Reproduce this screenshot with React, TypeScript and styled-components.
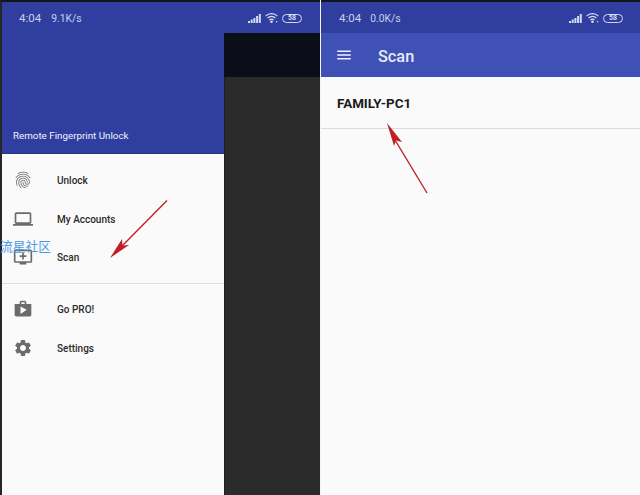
import React from "react";
import styled, { createGlobalStyle } from "styled-components";
import { MdFingerprint, MdLaptop, MdAddToQueue, MdShop, MdSettings, MdMenu } from "react-icons/md";

const Global = createGlobalStyle`
  html, body { margin: 0; padding: 0; background: #2a2a2a; }
  * { box-sizing: border-box; }
`;

const Stage = styled.div`
  position: relative;
  width: 640px;
  height: 495px;
  overflow: hidden;
  display: flex;
  background: #fafafa;
  font-family: Roboto, "Noto Sans", sans-serif;
`;

const LeftPhone = styled.div`
  width: 320px;
  height: 100%;
  display: flex;
  flex-direction: column;
  background: #2a2a2a;
  border-top: 2px solid #14141c;
  border-left: 2px solid #26262a;
`;

const PhoneBody = styled.div`
  flex: 1;
  display: flex;
  min-height: 0;
`;

const Drawer = styled.div`
  width: 222px;
  display: flex;
  flex-direction: column;
  background: #fafafa;
`;

const DrawerHeader = styled.div`
  height: 121px;
  flex: none;
  display: flex;
  flex-direction: column;
  justify-content: flex-end;
  background: #303f9f;
  border-bottom: 1px solid #28357f;
`;

const StatusBar = styled.div<{ $left: number; $right: number; $gap: number }>`
  height: 31px;
  flex: none;
  display: flex;
  align-items: center;
  gap: ${(p) => p.$gap}px;
  padding: 1px ${(p) => p.$right}px 0 ${(p) => p.$left}px;
  color: #c9cfec;
  font-size: 11.5px;
  background: #303f9f;
`;

const Speed = styled.span`
  font-size: 10.3px;
`;

const StatusIcons = styled.div`
  margin-left: auto;
  display: flex;
  align-items: center;
  gap: 4px;
`;

const Battery = styled.span`
  width: 20px;
  height: 9px;
  border: 1px solid #d5daf2;
  border-radius: 5px;
  display: flex;
  align-items: center;
  justify-content: center;
  color: #d5daf2;
  font-size: 7px;
  font-weight: 700;
  line-height: 1;
`;

const AppName = styled.div`
  padding: 0 0 11px 11px;
  color: #f0f2fb;
  font-size: 9.8px;
  font-weight: 400;
  line-height: 13px;
`;

const Menu = styled.div`
  padding-top: 7px;
`;

const MenuRow = styled.div`
  height: 38.5px;
  display: flex;
  align-items: center;
  padding-left: 11px;
  color: #2a2a2a;
  font-size: 10px;
  font-weight: 500;
  svg { width: 20px; height: 20px; color: #6b6b6b; flex: none; }
  span { margin-left: 24px; padding-top: 1px; }
`;

const MenuDivider = styled.div`
  height: 1px;
  margin: 6px 0 6.5px;
  background: #dedede;
`;

const Scrim = styled.div`
  flex: 1;
  display: flex;
  flex-direction: column;
  border-left: 1px solid #1e1e1e;
`;

const ScrimBar = styled.div`
  height: 44px;
  flex: none;
  margin-left: -1px;
  background: #0b0d18;
`;

const ScrimBody = styled.div`
  flex: 1;
  background: #2b2b2b;
`;

const Separator = styled.div`
  width: 1px;
  flex: none;
  background: #f4f4f4;
`;

const RightPhone = styled.div`
  flex: 1;
  display: flex;
  flex-direction: column;
  border-top: 2px solid #14141c;
`;

const AppBar = styled.div`
  height: 44px;
  flex: none;
  display: flex;
  align-items: center;
  padding-left: 14px;
  background: #3f51b5;
  color: #e8eaf6;
  font-size: 16.3px;
  font-weight: 500;
  svg { width: 18px; height: 18px; flex: none; color: #f0f1fa; }
  span { margin-left: 25px; padding-top: 2px; }
`;

const DeviceRow = styled.div`
  height: 52px;
  flex: none;
  display: flex;
  align-items: center;
  padding: 1px 0 0 16px;
  border-bottom: 1px solid #dcdcdc;
  color: #1a1a1a;
  font-size: 13.4px;
  font-weight: 700;
`;

const Watermark = styled.div`
  position: absolute;
  left: 0;
  top: 238px;
  color: #4a9be8;
  font-family: "Noto Sans CJK SC", sans-serif;
  font-size: 12.75px;
  line-height: 16px;
  white-space: nowrap;
`;

const ArrowLayer = styled.svg`
  position: absolute;
  inset: 0;
  width: 640px;
  height: 495px;
  pointer-events: none;
`;

const SignalIcon = () => (
  <svg width="13" height="9" viewBox="0 0 13 9" fill="#d5daf2">
    <rect x="0" y="7" width="2" height="2" />
    <rect x="2.7" y="5.5" width="2" height="3.5" />
    <rect x="5.4" y="4" width="2" height="5" />
    <rect x="8.1" y="2" width="2" height="7" />
    <rect x="10.8" y="0" width="2" height="9" />
  </svg>
);

const WifiIcon = () => (
  <svg width="13" height="10" viewBox="0 0 13 10" fill="none" stroke="#d5daf2" strokeWidth="1.2">
    <path d="M.6 3.2a8 8 0 0 1 11.8 0" />
    <path d="M2.6 5.2a5.2 5.2 0 0 1 7.8 0" />
    <path d="M4.5 7a2.6 2.6 0 0 1 4 0" />
    <circle cx="6.5" cy="8.7" r=".7" fill="#d5daf2" />
    <circle cx="11.6" cy="8.7" r=".8" fill="#d5daf2" stroke="none" />
  </svg>
);

const Status = ({ speed, left, right, gap }: { speed: string; left: number; right: number; gap: number }) => (
  <StatusBar $left={left} $right={right} $gap={gap}>
    <span>4:04</span>
    <Speed>{speed}</Speed>
    <StatusIcons>
      <SignalIcon />
      <WifiIcon />
      <Battery>58</Battery>
    </StatusIcons>
  </StatusBar>
);

const items = [
  { icon: <MdFingerprint />, label: "Unlock" },
  { icon: <MdLaptop />, label: "My Accounts" },
  { icon: <MdAddToQueue />, label: "Scan" },
];
const extras = [
  { icon: <MdShop />, label: "Go PRO!" },
  { icon: <MdSettings />, label: "Settings" },
];

export default function App() {
  return (
    <Stage>
      <Global />
      <LeftPhone>
        <Status speed="9.1K/s" left={17} right={18} gap={10} />
        <PhoneBody>
          <Drawer>
            <DrawerHeader>
              <AppName>Remote Fingerprint Unlock</AppName>
            </DrawerHeader>
            <Menu>
              {items.map((i) => (
                <MenuRow key={i.label}>{i.icon}<span>{i.label}</span></MenuRow>
              ))}
              <MenuDivider />
              {extras.map((i) => (
                <MenuRow key={i.label}>{i.icon}<span>{i.label}</span></MenuRow>
              ))}
            </Menu>
          </Drawer>
          <Scrim>
            <ScrimBar />
            <ScrimBody />
          </Scrim>
        </PhoneBody>
      </LeftPhone>
      <Separator />
      <RightPhone>
        <Status speed="0.0K/s" left={18} right={17} gap={9} />
        <AppBar>
          <MdMenu />
          <span>Scan</span>
        </AppBar>
        <DeviceRow>FAMILY-PC1</DeviceRow>
      </RightPhone>
      <Watermark>流星社区</Watermark>
      <ArrowLayer viewBox="0 0 640 495">
        <path d="M167 200.5 L122 246" stroke="#bf2028" strokeWidth="1.4" fill="none" />
        <path d="M110 258 L122 239 L122.5 245.5 L129 245 Z" fill="#bf2028" />
        <path d="M427 193 L395 140" stroke="#bf2028" strokeWidth="1.4" fill="none" />
        <path d="M387 123 L402 142 L396 140.5 L394 146 Z" fill="#bf2028" />
      </ArrowLayer>
    </Stage>
  );
}
